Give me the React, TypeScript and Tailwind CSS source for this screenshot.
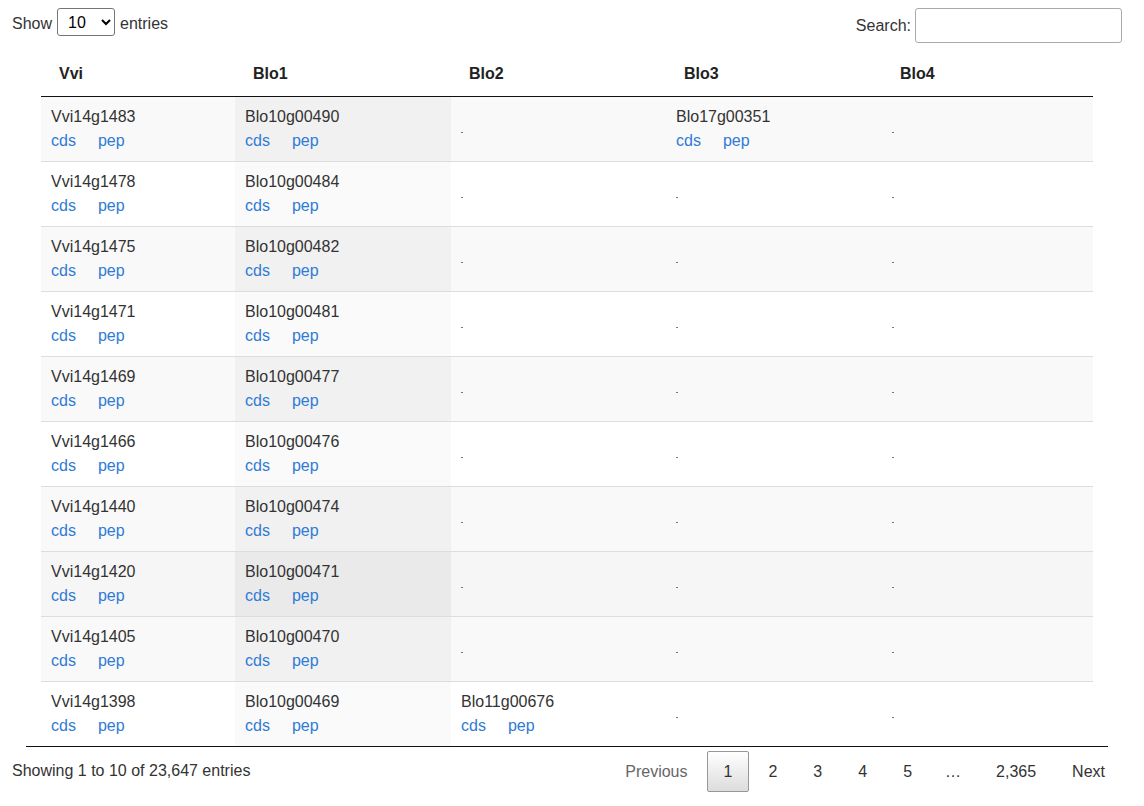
import React from "react";

type Row = (string | null)[];

const rows: Row[] = [
  ["Vvi14g1483", "Blo10g00490", null, "Blo17g00351", null],
  ["Vvi14g1478", "Blo10g00484", null, null, null],
  ["Vvi14g1475", "Blo10g00482", null, null, null],
  ["Vvi14g1471", "Blo10g00481", null, null, null],
  ["Vvi14g1469", "Blo10g00477", null, null, null],
  ["Vvi14g1466", "Blo10g00476", null, null, null],
  ["Vvi14g1440", "Blo10g00474", null, null, null],
  ["Vvi14g1420", "Blo10g00471", null, null, null],
  ["Vvi14g1405", "Blo10g00470", null, null, null],
  ["Vvi14g1398", "Blo10g00469", "Blo11g00676", null, null],
];

const headers = ["Vvi", "Blo1", "Blo2", "Blo3", "Blo4"];
const widths = ["w-[194px]", "w-[216px]", "w-[215px]", "w-[216px]", "w-[211px]"];

// row 8 is shown hovered in the picture
const HOVER_ROW = 7;

const GeneCell = ({ id }: { id: string | null }) => {
  if (!id) {
    return <span className="relative top-[3px] inline-block w-[2px] h-[1px] bg-[#777] align-middle" />;
  }
  return (
    <div className="flex flex-col">
      <span>{id}</span>
      <span>
        <a href="#" className="text-[#2f7bd6]">cds</a>
        <a href="#" className="text-[#2f7bd6] ml-[22px]">pep</a>
      </span>
    </div>
  );
};

const cellBg = (rowIdx: number, colIdx: number) => {
  const odd = rowIdx % 2 === 0;
  if (rowIdx === HOVER_ROW) return colIdx === 1 ? "bg-[#eaeaea]" : "bg-[#f6f6f6]";
  if (colIdx === 1) return odd ? "bg-[#f1f1f1]" : "bg-[#fafafa]";
  return odd ? "bg-[#f9f9f9]" : "bg-white";
};

const PageButton = ({
  label,
  current,
  disabled,
}: {
  label: string;
  current?: boolean;
  disabled?: boolean;
}) => (
  <a
    href="#"
    className={
      "ml-[2px] px-4 py-[8px] leading-[23px] border rounded-[2px] " +
      (current
        ? "border-[#979797] bg-gradient-to-b from-white to-[#dcdcdc] text-[#333]"
        : "border-transparent " + (disabled ? "text-[#666]" : "text-[#333]"))
    }
  >
    {label}
  </a>
);

export default function App() {
  return (
    <div
      className="w-[1144px] h-[806px] bg-white text-[#333] text-[16px] leading-6 overflow-hidden"
      style={{ fontFamily: '"Liberation Sans", Arial, sans-serif' }}
    >
      <div className="pl-[12px] pr-[22px]">
        {/* top controls */}
        <div className="h-[52px] flex justify-between items-start pt-[8px]">
          <div className="flex items-center h-[28px]">
            <span className="relative top-[2px]">Show</span>
            <select
              defaultValue="10"
              className="mx-[5px] h-[28px] w-[58px] border border-[#767676] rounded-[3px] bg-white px-[6px] text-[16px] text-black"
            >
              <option value="10">10</option>
              <option value="25">25</option>
              <option value="50">50</option>
              <option value="100">100</option>
            </select>
            <span className="relative top-[2px]">entries</span>
          </div>
          <div className="flex items-center h-[35px]">
            <label className="mr-[4px]">Search:</label>
            <input
              type="text"
              className="w-[207px] h-[35px] border border-[#aaa] rounded-[3px] px-[5px] bg-white"
            />
          </div>
        </div>

        {/* table */}
        <div className="mx-[14px] border-b border-[#111]">
          <table className="mx-[15px] w-[1052px] table-fixed border-collapse">
            <thead>
              <tr>
                {headers.map((h, i) => (
                  <th
                    key={h}
                    className={widths[i] + " px-[18px] py-[10px] text-left font-bold text-[#222] border-b border-[#111]"}
                  >
                    {h}
                  </th>
                ))}
              </tr>
            </thead>
            <tbody>
              {rows.map((row, r) => (
                <tr key={r} className={r === 0 ? "" : "border-t border-[#ddd]"}>
                  {row.map((cell, c) => (
                    <td key={c} className={cellBg(r, c) + " px-[10px] py-[8px] align-middle"}>
                      <GeneCell id={cell} />
                    </td>
                  ))}
                </tr>
              ))}
            </tbody>
          </table>
        </div>

        {/* footer */}
        <div className="flex justify-between items-start">
          <div className="pt-[12px]">Showing 1 to 10 of 23,647 entries</div>
          <div className="flex items-center pt-[4px]">
            <PageButton label="Previous" disabled />
            <PageButton label="1" current />
            <PageButton label="2" />
            <PageButton label="3" />
            <PageButton label="4" />
            <PageButton label="5" />
            <span className="px-4 text-[#333]">…</span>
            <PageButton label="2,365" />
            <PageButton label="Next" />
          </div>
        </div>
      </div>
    </div>
  );
}
